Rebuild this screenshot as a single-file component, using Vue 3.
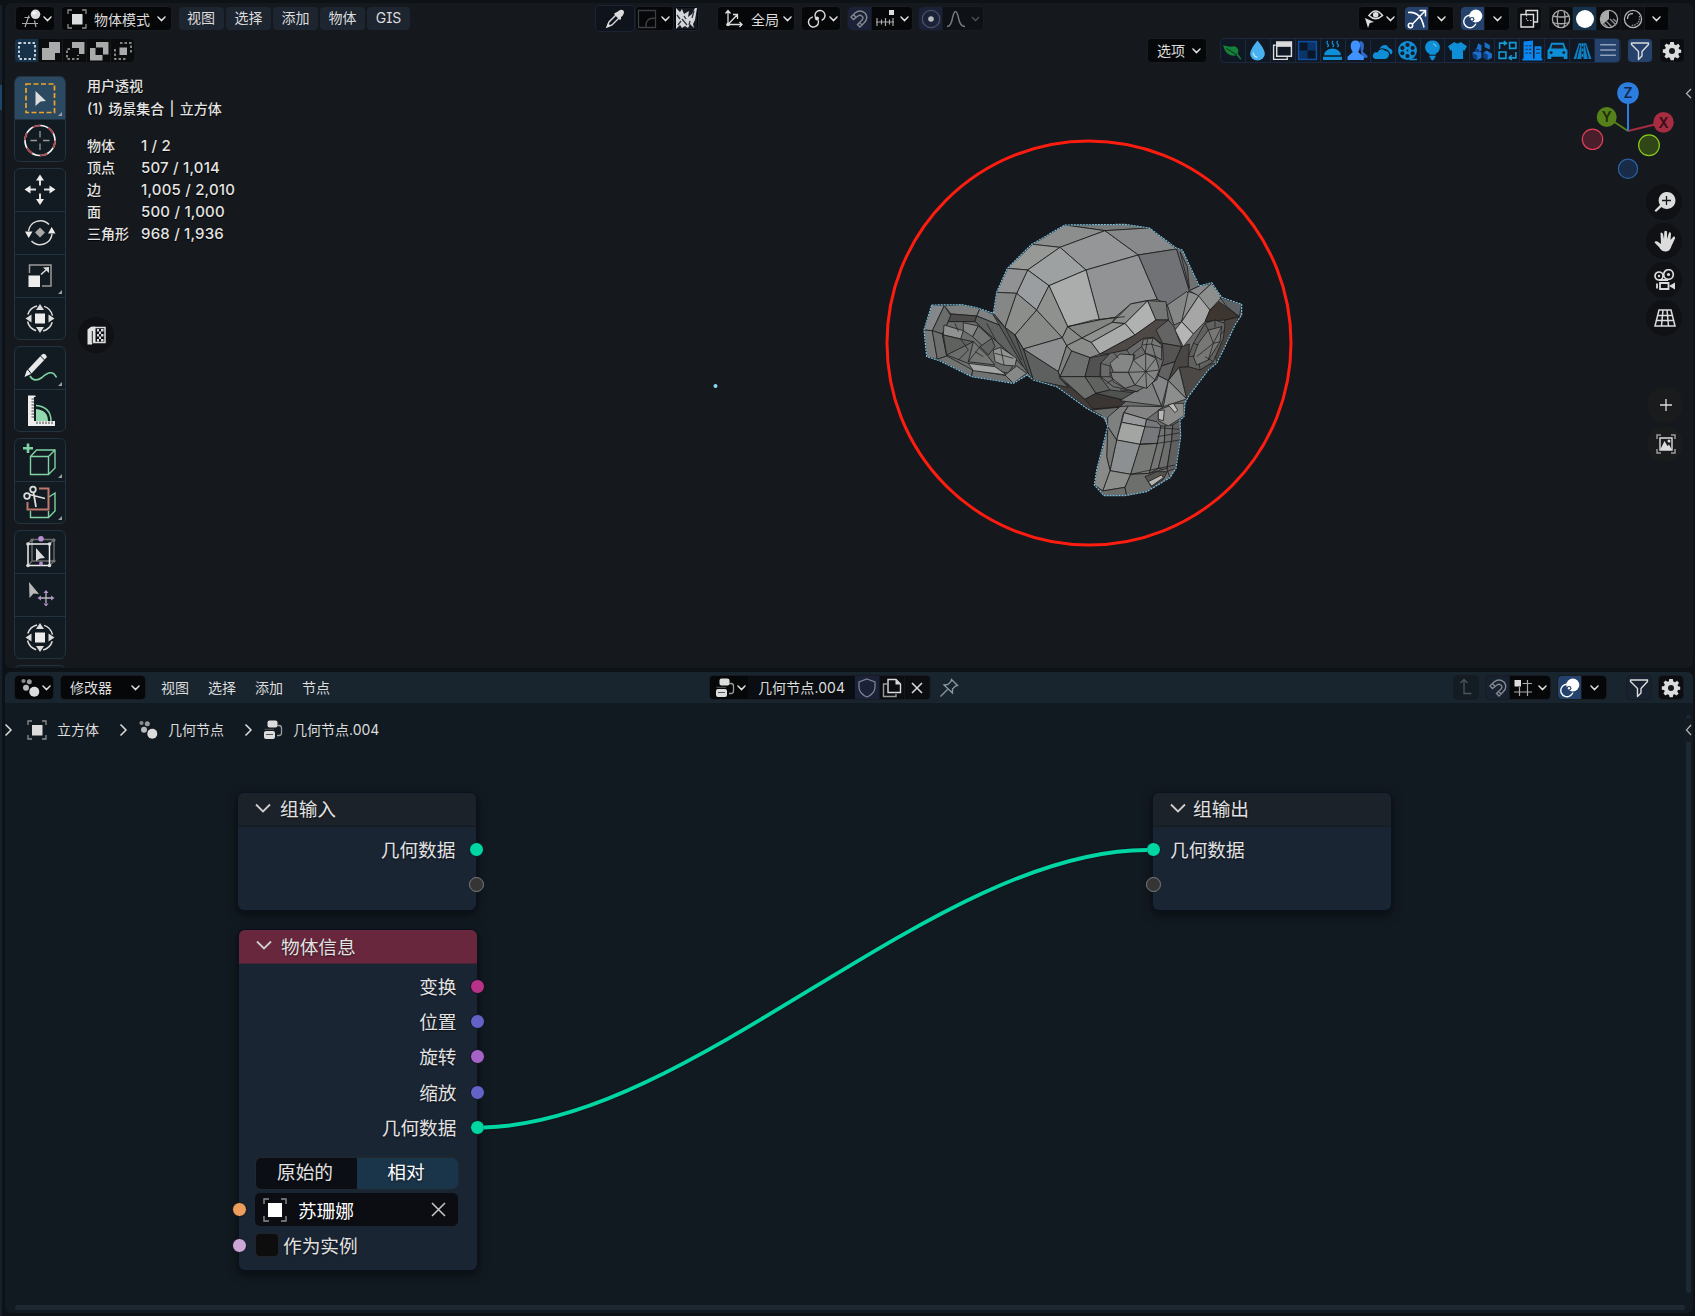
<script setup>
const W = '#dcdcdc'
const s = (d, extra = '') => `<path d="${d}" fill="none" stroke="${W}" stroke-width="1.5" ${extra}/>`
const f = (d, c = W) => `<path d="${d}" fill="${c}"/>`
const c = (x, y, r, fill = W, extra = '') => `<circle cx="${x}" cy="${y}" r="${r}" fill="${fill}" ${extra}/>`
const r = (x, y, w, h, fill = W, extra = '') => `<rect x="${x}" y="${y}" width="${w}" height="${h}" fill="${fill}" ${extra}/>`
const ln = (col, w = 1.3) => `fill="none" stroke="${col}" stroke-width="${w}"`

// small icons, drawn on a 20 x 20 grid
const icons = {
  chev: s('M6.3 8.3L10 12.2L13.7 8.3', 'stroke-linecap="round"'),
  editor3d: `<path d="M3.5 8.5H9M1 14.5H17M8 6.5L4 18M13.5 11.5L15 18" ${ln('#a9a9a9', 1.2)}/>` + c(14.5, 5.3, 4.8) + c(13, 4, 1.6, '#fff'),
  object: `<path d="M1 5V1H5M15 1H19V5M19 15V19H15M5 19H1V15" ${ln('#8d8d8d', 1.3)}/>` + r(5, 5, 10.5, 10.5),
  dropper: `<path d="M2 18L4 13L11 6L14 9L7 16Z" ${ln(W, 1.4)}/>` + f('M10 4L12 3L15 1Q19 0 19 4Q18 7 16 8L16 10L15 11L9 5Z') + f('M1.5 18.500L3 14L5.500 17Z'),
  falloffbox: `<path d="M1.500 1.500H18.500V18.500H1.500ZM9 18Q8 9 18 9" ${ln('#3c3f43', 1.3)}/>`,
  orient: `<path d="M4 2V15.500H18M4 15.500L13 6M1.500 4.500L4 1.500L6.500 4.500M15.500 13L18 15.500L15.500 18M9 5.500H13.500V10" ${ln(W, 1.3)}/>` + c(4, 15.5, 1.8),
  pivot: `<circle cx="13" cy="6.500" r="5" ${ln(W, 1.4)} stroke-dasharray="24 7.400" transform="rotate(150 13 6.500)"/><circle cx="6.500" cy="13" r="5" ${ln(W, 1.4)} stroke-dasharray="24 7.400" transform="rotate(-20 6.500 13)"/>` + c(10, 9.5, 2),
  magnet: `<path d="M2 8L6 4Q11 0 16 4Q20 9 15 14L11 18L8.500 15.500L13 11Q15 8.500 12.800 7Q11 5.500 9 7L4.500 10.500ZM4.500 5.500L7 8.500M13 16L10.500 13.500" ${ln('#85888e', 1.4)}/>`,
  snapinc: `<path d="M1 13H19M2 9V17M6.500 10.500V15.500M10.500 9V17M14.500 10.500V15.500M18 9V17" ${ln('#a9a9a9', 1.2)}/>` + r(14, 1, 5, 5),
  propdot: `<circle cx="10" cy="10" r="8.700" ${ln('#4a5163', 1.3)}/>` + c(10, 10, 2.8, '#b9bbc0'),
  bell: `<path d="M1 17.500Q5 17.500 6.500 9Q9.500 -4 12.500 9Q14 17.500 19 17.500" ${ln('#75787c', 1.5)}/>`,
  chevdim: `<path d="M6.300 8.300L10 12.200L13.700 8.300" ${ln('#4a4d50', 1.5)}/>`,
  eye: `<path d="M5 6.500Q11.500 -2.500 18.500 6.500Q11.500 13 5 6.500Z" ${ln(W, 1.6)}/>` + c(11.7, 5.7, 2.8) + f('M1 9L10 13L5.800 14L4 19Z'),
  gizmo: `<path d="M1 3.500Q14 2 17 18.500M5 15.500L18 2M12.500 1.500H18.500V7.500" ${ln('#fff', 1.5)}/><circle cx="3.500" cy="16.500" r="2.200" ${ln('#fff', 1.5)}/>`,
  overlay: `<circle cx="7" cy="12.500" r="6.200" ${ln('#fff', 1.4)} stroke-dasharray="29 10" transform="rotate(20 7 12.500)"/>` + c(12.8, 7, 6.5, '#fff') + c(9, 10.3, 2.4, '#24406a') + c(9, 10.3, 1.2, '#fff'),
  xray: `<path d="M7 5V1.500H18.500V13H15" ${ln(W, 1.4)}/><path d="M2 5.500H14.500V18H2Z" ${ln(W, 1.4)}/><path d="M7.500 6V11.500H14" ${ln('#bbb', 1.2)} stroke-dasharray="1.500 1.500"/>`,
  wire: `<circle cx="10" cy="10" r="8.600" ${ln('#a9a9a9', 1.3)}/><path d="M1.500 7Q10 9 18.500 7M1.500 13.500Q10 16 18.500 13.500M7.500 1.800Q5 10 7.500 18.200M13 1.800Q15 10 13 18.200" ${ln('#a9a9a9', 1.3)}/>`,
  solid: c(10, 10, 9, '#fff'),
  matprev: `<circle cx="10" cy="10" r="8.600" ${ln('#a9a9a9', 1.3)}/>` + f('M10 1.500V10L3.500 15.500Q0 10 3.500 4.500Q6 1.500 10 1.500Z', '#a9a9a9') + `<path d="M11 10L17 16M14 10L18 13M7.500 12.500L13 18M5 14.500L8.500 18" ${ln('#8d8d8d', 1.4)}/>`,
  render: `<circle cx="10" cy="10" r="8.600" ${ln('#b5b5b5', 1.3)}/><path d="M4.500 10Q4.500 4.500 10 4.500" ${ln('#b5b5b5', 1.3)}/><path d="M16.500 7Q17.500 16 8 16.500" ${ln('#8a8a8a', 1.5)} stroke-dasharray="1.500 1"/>`,
  leaf: f('M1 5Q7 7 12 6Q17 8 15 13L18.500 18L17.500 18.500L14 14.500Q4 17 1 5Z', '#15803a') + `<path d="M4 8L14 14" ${ln('#0b3a20', 1)}/>`,
  drop: f('M10 0.500Q17 9 17 13A7 6.500 0 0 1 3 13Q3 9 10 0.500Z', '#48b1f0') + `<path d="M6 12Q6.500 16 10 16.500" ${ln('#bfe5ff', 1.2)}/>`,
  win: `<path d="M3.500 5H1.500V18.500H14.500V16.500" ${ln(W, 1.3)}/><path d="M4.500 2H18.500V15.500H4.500Z" ${ln(W, 1.4)}/>` + r(4.5, 2, 14, 4.500),
  checker: r(1.5, 1.5, 17, 17, '#0b3468', 'stroke="#0f4fa3" stroke-width="1.400"') + r(2.5, 2.5, 7.5, 7.5, '#0a1728') + r(10, 10, 7.5, 7.5, '#0a1728'),
  steam: f('M2 14.500A8 6.500 0 0 1 18 14.500ZM1 16H19V19H1Z', '#0f8fd8') + `<path d="M5.500 1Q4 2.500 5.500 4T5 6.500M10.500 1Q9 2.500 10.500 4T10 6.500M15 1Q13.500 2.500 15 4T14.500 6.500" ${ln('#0f8fd8', 1.2)}/>`,
  people: f('M12 1Q17 1 16 8L15 11L19.500 15V17H14Z', '#2f68c9') + f('M8 0.500Q13 0.500 12.500 6Q12 10 10.500 11.500L16 16V19H0.500V16L5.500 11.500Q3.500 9 3.500 6Q3.500 0.500 8 0.500Z', '#3f92ff'),
  cloud: f('M3 18Q0 17 1 14Q2 11 5 12Q8 7 12 10Q17 11 16 15Q15 18 12 18Z', '#0f8fd8') + f('M7 9Q9 4 14 5Q16 8 18 8.500Q21 11 18 14Q16 9 12.500 8.500Q9 7 7 9Z', '#0f8fd8'),
  reel: c(10, 10, 9, '#0f8fd8') + c(10, 4.7, 2, '#14202c') + c(10, 15.3, 2, '#14202c') + c(5.1, 7.5, 2, '#14202c') + c(14.9, 7.5, 2, '#14202c') + c(5.1, 12.7, 1.9, '#14202c') + c(14.9, 12.7, 1.9, '#14202c') + c(10, 10, 0.9, '#14202c') + `<path d="M12 18.500H19" ${ln('#0f8fd8', 1.4)}/>`,
  bulb: f('M10 0.500A6.500 6.500 0 0 1 13 13V14H7V13A6.500 6.500 0 0 1 10 0.500ZM7 15H13V16.500H12V18L10 19.500L8 18V16.500H7Z', '#0f8fd8') + `<path d="M10.500 3.500Q13 4 13.500 6.500" ${ln('#6cc4f5', 1)}/>`,
  shirt: f('M7 2Q10 4.500 13 2L19 6L16.500 10.500L15.300 9.500V18H4.700V9.500L3.500 10.500L1 6Z', '#0f8fd8'),
  cubes: f('M6 3L9 5V10L6 12L4 9ZM0.500 12L5 10L9 12V17L5 19L1 17ZM11 12L14 10L19 13V17L15 19L11 17ZM12 2L17 5V9L12 7Z', '#1c70cc') + f('M3 8L7 9V12L3 11ZM1 12.500L5 14.500V19L1 17ZM11 12L15 14V19L11 17Z', '#0b3e80'),
  convert: `<path d="M2 11.500H8.500V17.500H2ZM12 2.500H18V8H12ZM2.500 8.500V3H8.500M6.500 1L9 3L6.500 5M18 11.500V17H12M14 14.500L11.500 17L14 19" ${ln('#149bd8', 1.5)}/>`,
  building: f('M1.500 1.500L10.500 0.500V18H1.500ZM12 6H18.500V18H12ZM0.500 17.500H19.500V19.500H0.500Z', '#0a86f0') + `<path d="M3.300 5.500H9M3.300 9H9M3.300 12.500H9M13.500 9H17M13.500 12.500H17" ${ln('#143c66', 1.2)}/><path d="M6 3V14" ${ln('#0a86f0', 1.2)}/>`,
  car: f('M4 2.500H16L18 8L19.500 9.500V18H16V16H4V18H0.500V9.500L2 8Z', '#0f8fd8') + f('M5 4.500H15L16 8H4Z', '#14202c') + c(4, 12, 1.4, '#14202c') + c(16, 12, 1.4, '#14202c'),
  road: f('M6.500 3H9V18H1.500ZM13.500 3H11V18H18.500Z', '#0f7fc4') + `<path d="M10 3V18" ${ln('#0f8fd8', 1.6)} stroke-dasharray="3 2"/><path d="M4.500 18L7.500 5M15.500 18L12.500 5" ${ln('#14202c', 1)}/>`,
  lines: `<path d="M3 4.500H18M3 9.500H18M3 14.500H18" ${ln('#8fa0bb', 1.4)}/>`,
  funnel: `<path d="M1.500 2H18.500V3.500L12 10.500V15L8.500 18.500V10.500L1.500 3.500Z" ${ln(W, 1.4)} stroke-linejoin="round"/>`,
  gear: f('M8.200 1H11.800L12.300 3.500L14 4.200L16.200 2.800L18 5L16.600 7L17 8.300L19.200 8.700V11.700L16.900 12L16.300 13.600L17.600 15.700L15.500 17.500L13.600 16.200L12.200 16.800L11.800 19.200H8.600L8 16.900L6.500 16.300L4.500 17.600L2.400 15.500L3.700 13.600L3.100 12.100L0.800 11.700V8.500L3.200 8L3.800 6.500L2.500 4.500L4.600 2.500L6.500 3.800L7.900 3.200Z') + c(10, 10, 3, '#15181d'),
  nodes: c(3.5, 3, 2.1, '#8a8a8a') + c(9.3, 3.8, 2.5, '#9a9a9a') + c(6, 9.7, 3, '#b9b9b9') + c(14.300, 13.800, 5),
  tree: r(4.500, 0.500, 10, 7, W, 'rx="2"') + r(1, 11, 11, 8, W, 'rx="2"') + `<path d="M1.500 9.300H11M3 14.500H10" ${ln('#555', 1)}/><path d="M14 5.500H16Q18.500 5.500 18.500 8V13Q18.500 15.500 16 15.500H14" ${ln('#9a9a9a', 1.3)}/>`,
  shield: `<path d="M10 1L18 4V9Q18 15.500 10 19Q2 15.500 2 9V4Z" ${ln('#7c8596', 1.3)}/>`,
  dup: `<path d="M5 6H1.500V18.500H14V16" ${ln('#9a9a9a', 1.4)}/><path d="M6 1.500H14L18.500 6V14.500H6Z" ${ln(W, 1.4)}/>` + f('M13.500 1.500V6.500H18.500Z'),
  x: s('M5 5L15 15M15 5L5 15'),
  pin: `<path d="M12.500 1.500L18.500 7.500L16.500 8L13.500 11V15L5 7L9 6.500L12 3.500ZM8.500 11.500L1.500 18.500" ${ln('#8e979e', 1.3)}/>`,
  up: `<path d="M8 1.500V15.500H15.500M4.500 5L8 1.500L11.500 5" ${ln('#4d545a', 1.3)}/>`,
  gridsnap: `<path d="M14.500 2V18M6.500 9V18M9.500 5.500H19M1 14H19" ${ln('#a9a9a9', 1.2)}/>` + r(1.500, 2, 6.500, 6.500),
  gt: s('M7.500 4.500L13 10L7.500 15.500'),
  selnew: `<path d="M2 2H18V18H2Z" ${ln('#fff', 1.5)} stroke-dasharray="2.500 2"/>`,
  selext: f('M8 1H19V12H14V19H1V7H8Z', '#a9abaa'),
  selsub: f('M7 1H19.500V13H14V7H7Z', '#a9abaa') + `<path d="M5 8H2V18H13V14" ${ln('#a9abaa', 1.5)} stroke-dasharray="2.500 2"/>`,
  seldif: f('M7 1H19.500V13.500H13.500V19.500H1V7H7Z', '#a9abaa') + r(6.5, 6.5, 7.5, 7.5, '#0b0c0d'),
  selint: r(6.5, 6.5, 7.5, 7.500, '#a9abaa') + `<path d="M7 2H18V13M2 8V18H13" ${ln('#a9abaa', 1.5)} stroke-dasharray="2.500 2"/>`
}

const ring = (dash) => `<circle cx="26" cy="21.500" r="12.800" ${ln(W, 1.5)} stroke-dasharray="${dash}" transform="rotate(17 26 21.500)"/>`
const arrows = f('M26 7L30 13H22ZM26 36L30 30H22ZM11.500 21.500L17.500 17.500V25.500ZM40.500 21.500L34.500 17.500V25.500Z')
const transform = ring('13 7.100') + arrows + r(21, 16.500, 10, 10, '#ededed')
// toolbar icons, one per 52 x 43 cell
const tools = {
  select: `<path d="M12 8H40.500V36.500H12Z" ${ln('#f0a526', 1.700)} stroke-dasharray="5 2.500"/>` + f('M21.500 15L32 25L26.500 25.500L21.500 30Z'),
  cursor: `<circle cx="26" cy="21.500" r="15" ${ln('#f2f2f2', 1.700)}/><circle cx="26" cy="21.500" r="15" ${ln('#a8444a', 1.700)} stroke-dasharray="7.850 7.850"/><path d="M26 12V18.500M26 24.500V31M16.500 21.500H23M29 21.500H35.500" ${ln('#999', 1.3)}/>`,
  move: `<path d="M26 12V17.500M26 25.500V31M16 21.500H22M30 21.500H36" ${ln(W, 2)}/>` + f('M26 6.500L30 12.500H22ZM26 37L30 31H22ZM10.500 21.500L16.500 17.500V25.500ZM41.500 21.500L35.500 17.500V25.500Z', '#eee'),
  rotate: `<path d="M14.500 20A12 12 0 0 1 35 13.500M38 23A12 12 0 0 1 17.500 30" ${ln(W, 1.5)}/>` + f('M26 16.500L31 21.500L26 26.500L21 21.500Z', '#a8a8a8') + f('M11 20.500H18.500L14.700 27ZM34 22.500H41.500L37.700 16Z', '#eee'),
  scale: `<path d="M15.500 19V11H37V32H28" ${ln('#9a9a9a', 1.500)}/><path d="M27 20.500L32 16" ${ln(W, 1.5)}/>` + f('M35 13V19L29 13.500Z') + r(14.500, 21.500, 11.500, 11.500, '#ededed'),
  transform,
  annotate: `<path d="M16 30Q20 37 28 31.500Q38 22 42.500 31.500" ${ln('#7fd3a3', 1.700)}/>` + f('M28 8.500Q31 6 33 11L17 28L10.500 31L12.500 25Z', '#e8e8e8') + `<path d="M26 9.500L31 14.500M13.500 23L17.500 28" ${ln('#131b22', 1)}/>`,
  measure: f('M14 6.500H21.500V8H20V32H41V37H14Z', '#ededed') + f('M22 20Q34 21 34 32H22Z', '#93d9b0') + `<path d="M22 16.500Q37 18 37 32" ${ln('#7fd3a3', 1.500)}/><path d="M17.500 10H20M17.500 13H20M17.500 16H20M17.500 19H20M17.500 22H20M17.500 25H20M17.500 28H20M23 32.500V35M26 32.500V35M29 32.500V35M32 32.500V35M35 32.500V35M38 32.500V35" ${ln('#444', 1)}/>`,
  addcube: `<path d="M16.500 18.500H34.500V36.500H16.500ZM16.500 18.500L22.500 12H41V30L34.500 36.500M34.500 18.500L41 12" ${ln('#7fd3a3', 1.4)}/><path d="M14 5.500V15M9 10.300H19" ${ln('#7fd3a3', 2.600)}/>`,
  cutcube: `<path d="M16.500 30V36.500H34.500L41 30V12L35 16M34.500 36.500V30" ${ln('#7fd3a3', 1.4)}/><path d="M25 7.500H34.500V28.500H13.500V21" ${ln('#c0776d', 2)}/><circle cx="19" cy="8.500" r="2.800" ${ln(W, 1.800)}/><circle cx="13" cy="15" r="2.800" ${ln(W, 1.800)}/><path d="M15.500 13.500L31 17.500M19.500 11.500L22 26" ${ln(W, 1.800)}/>`,
  cage: `<path d="M18 9.500H40V31H18ZM14 14L18 9.500M35.500 14L40 9.500M35.500 35.500L40 31M14 35.500L18 31" ${ln('#6d6d6d', 1.400)}/><path d="M14 14H35.500V35.500H14Z" ${ln('#eee', 1.500)}/>` + c(14, 14, 1.8) + c(35.5, 14, 1.8) + c(14, 35.5, 1.8) + c(35.5, 35.5, 1.8) + c(18, 10, 1.6, '#777') + c(40, 10, 1.6, '#777') + c(40, 31, 1.6, '#777') + c(27, 8.700, 2.800, '#b58fd0') + c(27, 33.5, 1.9, '#b58fd0') + f('M22 18L31 28L26 28.500L22 31Z'),
  nudge: f('M15 9L25 21L19.500 20.500L15.500 25Z', '#b9b9b9') + `<path d="M32 20V30M27 25H37" ${ln('#b9b9b9', 1.300)}/>` + f('M32 17L34.500 20H29.500ZM32 33.500L34.500 30.500H29.500ZM23.500 25L27 22.500V27.500ZM40.500 25L37 22.500V27.500Z', '#b58fd0')
}
const toolGroups = [
  [['select', true], ['cursor']],
  [['move'], ['rotate'], ['scale', true], ['transform']],
  [['annotate', true], ['measure']],
  [['addcube', true], ['cutcube', true]],
  [['cage'], ['nudge'], ['transform']],
  [['move']]
]
const menus3d = ['视图', '选择', '添加', '物体', 'GIS']
const menusNode = ['视图', '选择', '添加', '节点']
const selModes = ['selnew', 'selext', 'selsub', 'seldif', 'selint']
const filters = ['leaf', 'drop', 'win', 'checker', 'steam', 'people', 'cloud', 'reel', 'bulb', 'shirt', 'cubes', 'convert', 'building', 'car', 'road', 'lines']
const stats = [['物体', '1 / 2'], ['顶点', '507 / 1,014'], ['边', '1,005 / 2,010'], ['面', '500 / 1,000'], ['三角形', '968 / 1,936']]

const nav = [
  f('M12 1A8.500 8.500 0 1 1 7.500 16L2 21L0.500 19.500L6 14A8.500 8.500 0 0 1 12 1Z') + `<path d="M12.500 5V14M8 9.500H17" ${ln('#15181d', 1.300)}/>`,
  f('M6.500 3Q8 1.500 9 4L10 9L10.300 1.500Q11.800 0 13 1.500V9L15 2.500Q17 1.500 17 4L16.500 10L19.500 6.500Q21.500 6 21 8.500L17.500 16Q16 21.500 11.500 21.500Q7.500 21.500 5 17L0.500 12.500Q1 10.500 3.500 11.500L7 14Z'),
  `<circle cx="5" cy="7" r="4" ${ln(W, 1.700)}/><circle cx="14.500" cy="5.500" r="4.800" ${ln(W, 1.700)}/><path d="M5 11H14M6 14H14.500V20H6ZM3 14.500V19.500" ${ln(W, 1.800)}/>` + c(5, 7, 1.2) + c(14.500, 5.500, 1.600) + f('M15 17L21 13.500V20.500Z'),
  `<path d="M5 3H17L21 19H1ZM3.500 8.500H18.500M2.300 13.500H19.700M9 3L7.500 19M13 3L14.500 19" ${ln(W, 1.500)}/>`
]

// mesh faces: fill, points
const faces = [
  ['#3f3c3a', '460,510 540,505 615,568 720,590 700,605 675,622 625,595 530,530'],
  ['#6b6c6c', '635,600 715,592 683,650 665,617'],
  ['#4b4846', '925,470 1010,460 985,480 920,567 897,470'],
  ['#4a4542', '1035,330 1078,320 1065,345 1030,420 1010,460 1000,400'],
  ['#777a7a', '555,45 735,43 808,54 675,62'],
  ['#8c8e8e', '555,45 675,62 540,112 458,103'],
  ['#949698', '675,62 775,135 618,180 540,112'],
  ['#88898b', '675,62 808,54 890,117 775,135'],
  ['#979997', '458,103 540,112 443,180 383,175'],
  ['#9ea1a1', '540,112 618,180 507,227 443,180'],
  ['#929395', '618,180 775,135 832,268 800,272 752,282 705,322 658,330'],
  ['#717276', '775,135 890,117 928,242 912,270 862,285 832,268'],
  ['#6f7172', '890,117 907,120 935,180 958,228 928,242'],
  ['#606263', '900,125 922,170 928,235'],
  ['#abadad', '507,227 618,180 658,330 563,350'],
  ['#9b9ea0', '443,180 507,227 470,300 410,250'],
  ['#909294', '383,175 443,180 410,250 350,247'],
  ['#858787', '350,247 410,250 375,352 340,310'],
  ['#8c8e8c', '410,250 470,300 405,375 375,352'],
  ['#888a88', '470,300 547,383 430,417 405,375'],
  ['#8f918f', '507,227 563,350 547,383 470,300'],
  ['#8d8f91', '430,417 547,383 560,407 535,485'],
  ['#5e605f', '430,417 535,485 540,505 565,532 460,510'],
  ['#838582', '563,350 658,330 705,322 697,337 606,384'],
  ['#888a88', '547,383 563,350 606,384 560,407'],
  ['#7f8180', '560,407 575,423 540,500 535,485'],
  ['#8a8c8a', '560,407 606,384 634,397 660,432 630,443 575,423'],
  ['#8f918f', '606,384 697,337 735,340 634,397'],
  ['#a9abab', '634,397 735,340 765,375 660,432'],
  ['#b0b2b2', '735,340 803,272 828,330 765,375'],
  ['#8a8b8b', '697,337 752,282 803,272 735,340'],
  ['#757676', '803,272 858,275 865,330 828,330'],
  ['#4e4946', '828,330 865,330 848,400 790,385 740,420 690,432 660,432 765,375'],
  ['#6e706f', '575,423 630,443 615,500 540,500'],
  ['#505150', '630,443 690,432 662,460 660,500 615,500'],
  ['#6c6e6c', '540,500 615,500 648,550 615,568'],
  ['#606260', '615,500 660,500 690,540 648,550'],
  ['#3b3633', '615,568 648,550 740,572 720,590 640,597'],
  ['#505250', '648,550 690,540 760,548 740,572'],
  ['#656464', '828,360 865,330 882,350 905,410 848,400'],
  ['#555453', '848,400 905,410 885,455 838,470'],
  ['#4a4644', '905,410 928,402 925,470 897,472 865,512 885,455'],
  ['#626262', '838,470 885,455 865,512 835,497'],
  ['#7e8080', '897,472 920,567 865,512'],
  ['#7e7f80', '720,572 815,515 845,588'],
  ['#858687', '815,515 835,497 865,512 845,588'],
  ['#8c8e8d', '865,512 920,567 850,590'],
  ['#858787', '862,285 920,245 930,255 905,335 882,345'],
  ['#8e8f8f', '925,245 958,255 905,335'],
  ['#a5a6a5', '958,255 990,300 975,335 940,372 905,335'],
  ['#b5b6b4', '905,335 940,372 910,410 885,360'],
  ['#87898a', '928,242 958,228 995,220 955,257'],
  ['#8d8f8f', '995,220 1025,262 990,300 955,257'],
  ['#5f6265', '1020,262 1085,283 1078,320 1040,290'],
  ['#3c3530', '1017,275 1078,320 1035,330 975,335 990,300'],
  ['#6a6b6a', '662,460 690,430 740,420 790,385 820,382 848,405 850,450 830,510 770,545 700,530 662,500'],
  ['#858786', '690,460 720,432 765,435 750,487 700,487'],
  ['#7b7d7c', '692,487 745,487 765,525 735,535 700,515'],
  ['#848585', '797,430 828,445 838,480 825,510 800,535 765,525 745,487 760,450'],
  ['#787a79', '790,388 820,384 845,405 845,450 828,440 797,430 785,410'],
  ['#616160', '925,440 940,400 975,340 1005,330 1035,340 1030,385 1000,455 960,480 925,470'],
  ['#777876', '940,440 955,400 985,360 1025,350 1020,395 985,450 950,465'],
  ['#838483', '745,588 850,590 800,628 732,608'],
  ['#7f8180', '683,622 720,590 745,588 730,610 710,690 683,650'],
  ['#97999a', '732,608 800,628 795,650 725,637'],
  ['#a3a5a3', '725,637 795,650 780,703 710,690'],
  ['#8c9092', '710,690 780,703 752,793 690,782'],
  ['#8b8d8a', '690,782 752,793 735,832 668,843'],
  ['#777977', '683,650 710,690 690,782 680,740'],
  ['#888a87', '683,655 680,740 690,782 668,843 643,825 650,780'],
  ['#6c6e6c', '643,825 668,843 735,832 740,857 672,857'],
  ['#77787b', '800,628 830,635 843,648 832,700 780,703 795,650'],
  ['#777977', '780,703 832,700 808,790 752,793'],
  ['#747674', '843,648 855,648 853,700 835,775 808,790 832,700'],
  ['#6c6d6c', '855,648 878,645 875,690 860,780 835,775 853,700'],
  ['#5f605f', '878,645 902,630 902,680 888,775 860,785 875,690'],
  ['#6d6f6d', '752,793 808,790 860,775 870,803 800,845 740,857 735,832'],
  ['#8b8c8a', '835,600 890,580 912,580 912,618 865,648 835,632'],
  ['#b7b8b6', '835,602 853,600 850,632 835,628'],
  ['#bcbdbb', '865,585 880,580 893,600 885,608'],
  ['#55534f', '795,800 830,785 862,785 850,808 815,832'],
  ['#b5b6b4', '805,815 845,795 850,803 815,828'],
  ['#85888a', '155,285 193,287 157,362 132,360'],
  ['#6b6d6d', '193,287 213,318 187,372 157,362'],
  ['#77797b', '132,360 157,362 172,448 140,440'],
  ['#6d6f6f', '157,362 187,372 200,438 172,448'],
  ['#727474', '172,448 200,438 278,480 275,500'],
  ['#707271', '278,480 380,497 400,520 275,500'],
  ['#7e8080', '193,287 245,284 300,296 290,318 213,312'],
  ['#4c4b49', '213,312 290,318 285,335 205,335'],
  ['#808282', '300,296 345,315 375,352 290,318'],
  ['#5f6161', '290,318 375,352 430,470 400,440 350,395 285,335'],
  ['#6b6e6c', '205,335 285,335 350,395 410,450 385,490 270,462 200,435 187,372'],
  ['#909292', '192,345 250,362 242,387 190,375'],
  ['#858784', '250,338 295,348 278,380 250,362'],
  ['#727573', '295,348 335,385 310,410 278,380'],
  ['#616462', '335,385 345,410 325,435 300,410'],
  ['#5e615e', '190,375 242,387 280,395 200,435'],
  ['#747773', '280,395 325,440 345,465 265,455'],
  ['#a3a5a5', '265,460 345,470 380,495 280,482'],
  ['#929492', '340,420 362,412 410,445 405,468 370,465 345,455'],
  ['#868888', '410,468 440,490 400,520 375,495'],
  ['#565857', '340,315 375,352 405,375 430,417 460,510 430,470']
]
const wires = [
  'M797 485L797 430M797 485L828 445M797 485L838 480M797 485L825 510M797 485L800 535M797 485L765 525M797 485L745 487M797 485L760 450M662 460L690 468L690 500L662 500M690 500L735 535M785 410L760 430L760 450M720 540L775 545',
  'M820 382L815 400L828 445M788 405L812 402L845 412M803 388L795 430M740 420L750 435M703 430L715 445M680 520L697 510',
  'M1000 400L985 360M1000 400L1025 350M1000 400L1020 395M1000 400L985 450M1000 400L950 440M925 440L945 438M940 400L955 405M975 340L985 360M1005 330V352M960 480L958 462M1035 360L1020 375M1000 455L975 440',
  'M795 650L832 653L900 658M832 680L902 668M780 703L832 700L900 690M752 793L835 775L885 765',
  'M225 340L235 365M242 387L265 420L235 450M265 455L300 410M285 425L310 440M345 430L400 445M362 412L372 465',
  'M563 350L640 330L735 320M405 375L445 490M375 352L425 450M320 340L350 395'
]
const silhouette = '155,285 245,284 290,293 340,310 350,246 382,175 455,103 555,45 735,43 808,54 890,115 907,120 935,180 958,228 995,218 1025,262 1085,283 1085,315 1065,345 1030,420 1010,460 985,480 925,560 915,580 912,620 900,630 902,680 888,775 870,803 800,845 735,857 672,857 643,825 650,780 683,650 675,625 620,595 530,530 460,510 442,495 400,520 275,500 178,452 140,440 132,360'

const outputs = [['变换', 'magenta'], ['位置', 'indigo'], ['旋转', 'violet'], ['缩放', 'indigo'], ['几何数据', 'geo']]
</script>

<template>
  <div class="screen">
    <div class="edge"><i></i></div>
    <section class="view3d">
      <svg class="scene" width="1688" height="665" viewBox="5 3 1688 665">
        <g transform="translate(880 210) scale(.33333)" stroke-linejoin="round">
          <polygon :points="silhouette" fill="#6c6e6d" />
          <polygon v-for="(p, i) in faces" :key="i" :points="p[1]" :fill="p[0]" stroke="#1c1c1c" stroke-width="2.4" />
          <path v-for="w in wires" :key="w" :d="w" fill="none" stroke="#1c1c1c" stroke-width="2.2" />
          <polygon :points="silhouette" fill="none" stroke="#79c3e6" stroke-width="3.4" stroke-dasharray="6 3" />
        </g>
        <circle cx="1089" cy="343" r="202" fill="none" stroke="#fc1c10" stroke-width="3" />
        <circle cx="715.500" cy="386" r="2" fill="#8ad6f5" />
        <g stroke-width="2">
          <path d="M1628 131L1606.700 117" stroke="#55801a" /><path d="M1628 131L1663 122.500" stroke="#a62c42" /><path d="M1628 131V93" stroke="#2b7de0" />
          <circle cx="1606.700" cy="117" r="10" fill="#55801a" /><circle cx="1663.500" cy="122.400" r="10.300" fill="#a62c42" /><circle cx="1628" cy="93" r="10.800" fill="#2b7de0" />
          <g stroke-width="1.200">
            <circle cx="1592.500" cy="139.300" r="10.200" fill="#4a1f2b" stroke="#e0405a" /><circle cx="1649" cy="145.200" r="10.400" fill="#304617" stroke="#86c81c" /><circle cx="1628" cy="168.800" r="9.600" fill="#192c47" stroke="#2a62a8" />
          </g>
        </g>
        <g class="axis" text-anchor="middle"><text x="1628" y="98" fill="#11294a">Z</text><text x="1606.700" y="122" fill="#1c2c08">Y</text><text x="1663.500" y="127.500" fill="#380c15">X</text></g>
        <path d="M1691 89L1686.500 93.500L1691 98" fill="none" stroke="#b0b0b0" stroke-width="1.300" />
      </svg>

      <header class="bar top">
        <div class="grp w38"><svg class="ic" viewBox="0 0 20 20" v-html="icons.editor3d" /><svg class="ch" viewBox="0 0 20 20" v-html="icons.chev" /></div>
        <div class="grp mode"><svg class="ic" viewBox="0 0 20 20" v-html="icons.object" /><span>物体模式</span><svg class="ch" viewBox="0 0 20 20" v-html="icons.chev" /></div>
        <nav class="menus"><b v-for="m in menus3d" :key="m">{{ m }}</b></nav>
        <div class="center">
          <div class="grp tall w38"><svg class="ic" viewBox="0 0 20 20" v-html="icons.dropper" /></div>
          <div class="grp w38"><svg class="ic" viewBox="0 0 20 20" v-html="icons.falloffbox" /><svg class="ch" viewBox="0 0 20 20" v-html="icons.chev" /></div>
          <div class="grp tex"><svg width="21" height="21" viewBox="0 0 21 21"><rect width="21" height="21" fill="#161a20" /><path d="M0 0L4 4L6 1L8 6L13 3L12 9L16 6L19 0L21 0L19 12L17 16L18 20L14 16L12 20L9 18L6 20L4 17L0 21Z" fill="#d4d6da" /><path d="M1 7L4 11M6 11L11 17M2 17L5 13M14 13L13 17M18 3L16 10M8 8L10 11" stroke="#30343c" stroke-width="1.300" /></svg></div>
          <div class="grp orient"><svg class="ic" viewBox="0 0 20 20" v-html="icons.orient" /><span>全局</span><svg class="ch" viewBox="0 0 20 20" v-html="icons.chev" /></div>
          <div class="grp w38 g8"><svg class="ic" viewBox="0 0 20 20" v-html="icons.pivot" /><svg class="ch" viewBox="0 0 20 20" v-html="icons.chev" /></div>
          <div class="grp pair g7"><i class="cell navy"><svg class="ic" viewBox="0 0 20 20" v-html="icons.magnet" /></i><svg class="ic" viewBox="0 0 20 20" v-html="icons.snapinc" /><svg class="ch" viewBox="0 0 20 20" v-html="icons.chev" /></div>
          <div class="grp pair g7 dim"><i class="cell navy"><svg class="ic" viewBox="0 0 20 20" v-html="icons.propdot" /></i><svg class="ic" viewBox="0 0 20 20" v-html="icons.bell" /><svg class="ch" viewBox="0 0 20 20" v-html="icons.chevdim" /></div>
        </div>
        <div class="right">
          <div class="grp w38"><svg class="ic" viewBox="0 0 20 20" v-html="icons.eye" /><svg class="ch" viewBox="0 0 20 20" v-html="icons.chev" /></div>
          <div class="grp duo"><i class="cell on"><svg class="ic" viewBox="0 0 20 20" v-html="icons.gizmo" /></i><svg class="ch" viewBox="0 0 20 20" v-html="icons.chev" /></div>
          <div class="grp duo"><i class="cell on"><svg class="ic" viewBox="0 0 20 20" v-html="icons.overlay" /></i><svg class="ch" viewBox="0 0 20 20" v-html="icons.chev" /></div>
          <div class="grp one"><svg class="ic" viewBox="0 0 20 20" v-html="icons.xray" /></div>
          <div class="grp shade">
            <i class="cell"><svg class="ic" viewBox="0 0 20 20" v-html="icons.wire" /></i><i class="cell teal"><svg class="ic" viewBox="0 0 20 20" v-html="icons.solid" /></i><i class="cell"><svg class="ic" viewBox="0 0 20 20" v-html="icons.matprev" /></i><i class="cell"><svg class="ic" viewBox="0 0 20 20" v-html="icons.render" /></i><i class="cell black"><svg class="ch" viewBox="0 0 20 20" v-html="icons.chev" /></i>
          </div>
        </div>
      </header>

      <div class="bar second">
        <div class="selmodes"><i v-for="(m, i) in selModes" :key="m" :class="{ act: i === 0 }"><svg class="ic" viewBox="0 0 20 20" v-html="icons[m]" /></i></div>
        <div class="right">
          <div class="grp opts"><span>选项</span><svg class="ch" viewBox="0 0 20 20" v-html="icons.chev" /></div>
          <div class="filters"><i v-for="m in filters" :key="m" :class="{ on: m === 'lines' }"><svg width="21" height="21" viewBox="0 0 20 20" v-html="icons[m]" /></i></div>
          <div class="grp one on"><svg class="ic" viewBox="0 0 20 20" v-html="icons.funnel" /></div>
          <div class="grp one"><svg class="ic" viewBox="0 0 20 20" v-html="icons.gear" /></div>
        </div>
      </div>

      <div class="stage">
        <aside class="tools">
          <div v-for="(g, i) in toolGroups" :key="i" class="toolgrp">
            <div v-for="(t, j) in g" :key="j" class="tool" :class="{ sel: t[0] === 'select' }">
              <svg width="52" height="43" viewBox="0 0 52 43" v-html="tools[t[0]]" /><u v-if="t[1]"></u>
            </div>
          </div>
        </aside>
        <div class="info">
          <p>用户透视</p><p>(1) 场景集合 | 立方体</p>
          <dl><template v-for="x in stats" :key="x[0]"><dt>{{ x[0] }}</dt><dd>{{ x[1] }}</dd></template></dl>
        </div>
      </div>
      <div class="round panelbtn"><svg width="19" height="19" viewBox="0 0 19 19"><path d="M5 1.500H18V16.500H5" fill="none" stroke="#dcdcdc" stroke-width="1.500" /><path d="M0.500 3.500L4 0.700H8.500V16H5V18.500H0.500Z" fill="#e2e2e2" /><path d="M5.300 5V17" stroke="#222" /><path d="M10 3H12V5.500H10ZM14 3H16.500V5.500H14ZM12 5.500H14V8H12ZM10 8H12V10.500H10ZM14 8H16.500V10.500H14ZM12 10.500H14V13H12ZM10 13H12V15.500H10ZM14 13H16.500V15.500H14Z" fill="#dcdcdc" /></svg></div>
      <div class="nav">
        <div v-for="n in nav" :key="n" class="round"><svg width="22" height="22" viewBox="0 0 22 22" v-html="n" /></div>
        <div class="round gray far"><svg width="22" height="22" viewBox="0 0 22 22"><path d="M11 5V17M5 11H17" stroke="#dcdcdc" stroke-width="1.300" /></svg></div>
        <div class="round gray"><svg width="22" height="22" viewBox="0 0 22 22"><path d="M2 6V2H6M16 2H20V6M20 16V20H16M6 20H2V16" fill="none" stroke="#999" stroke-width="1.500" /><path d="M5 5H17V17H5Z" fill="none" stroke="#dcdcdc" stroke-width="1.400" /><path d="M5 17L9.500 8L12.500 13L14 11.500L17 17Z" fill="#dcdcdc" /><circle cx="14" cy="8" r="1.500" fill="#dcdcdc" /></svg></div>
      </div>
    </section>

    <section class="nodeed">
      <header class="bar nodebar">
        <div class="grp w38"><svg class="ic" viewBox="0 0 20 20" v-html="icons.nodes" /><svg class="ch" viewBox="0 0 20 20" v-html="icons.chev" /></div>
        <div class="grp modi"><span>修改器</span><svg class="ch" viewBox="0 0 20 20" v-html="icons.chev" /></div>
        <nav class="plain"><b v-for="m in menusNode" :key="m">{{ m }}</b></nav>
        <div class="grp data">
          <i class="cell black w38"><svg class="ic" viewBox="0 0 20 20" v-html="icons.tree" /><svg class="ch" viewBox="0 0 20 20" v-html="icons.chev" /></i><span>几何节点.004</span><i class="cell navy"><svg class="ic" viewBox="0 0 20 20" v-html="icons.shield" /></i><i class="cell"><svg class="ic" viewBox="0 0 20 20" v-html="icons.dup" /></i><i class="cell"><svg class="ic" viewBox="0 0 20 20" v-html="icons.x" /></i>
        </div>
        <svg class="ic pin" viewBox="0 0 20 20" v-html="icons.pin" />
        <div class="right">
          <div class="grp one faint"><svg class="ic" viewBox="0 0 20 20" v-html="icons.up" /></div>
          <div class="grp pair"><i class="cell navy2"><svg class="ic" viewBox="0 0 20 20" v-html="icons.magnet" /></i><svg class="ic" viewBox="0 0 20 20" v-html="icons.gridsnap" /><svg class="ch" viewBox="0 0 20 20" v-html="icons.chev" /></div>
          <div class="grp duo"><i class="cell on"><svg class="ic" viewBox="0 0 20 20" v-html="icons.overlay" /></i><svg class="ch" viewBox="0 0 20 20" v-html="icons.chev" /></div>
          <div class="grp one fil"><svg class="ic" viewBox="0 0 20 20" v-html="icons.funnel" /></div>
          <div class="grp one"><svg class="ic" viewBox="0 0 20 20" v-html="icons.gear" /></div>
        </div>
      </header>

      <div class="crumbs">
        <svg class="ic tab" viewBox="0 0 20 20" v-html="icons.gt" />
        <svg class="ic" viewBox="0 0 20 20" v-html="icons.object" /><span class="c1">立方体</span>
        <svg class="ic" viewBox="0 0 20 20" v-html="icons.gt" />
        <svg class="ic k" viewBox="0 0 20 20" v-html="icons.nodes" /><span class="c2">几何节点</span>
        <svg class="ic" viewBox="0 0 20 20" v-html="icons.gt" />
        <svg class="ic k" viewBox="0 0 20 20" v-html="icons.tree" /><span>几何节点.004</span>
      </div>

      <div class="node in">
        <h3><svg width="16" height="10" viewBox="0 0 16 10"><path d="M1 1.500L8 8.500L15 1.500" /></svg>组输入</h3>
        <div class="row out">几何数据<i class="sock geo"></i></div>
        <div class="row out"><i class="sock virt"></i></div>
      </div>
      <div class="node res">
        <h3><svg width="16" height="10" viewBox="0 0 16 10"><path d="M1 1.500L8 8.500L15 1.500" /></svg>组输出</h3>
        <div class="row inp">几何数据<i class="sock geo"></i></div>
        <div class="row inp"><i class="sock virt"></i></div>
      </div>
      <div class="node obj">
        <h3><svg width="16" height="10" viewBox="0 0 16 10"><path d="M1 1.500L8 8.500L15 1.500" /></svg>物体信息</h3>
        <div v-for="o in outputs" :key="o[0]" class="row out">{{ o[0] }}<i class="sock" :class="o[1]"></i></div>
        <div class="seg"><span>原始的</span><span class="act">相对</span></div>
        <div class="row field"><div class="box"><svg width="24" height="24" viewBox="0 0 24 24"><path d="M1 6V1H6M18 1H23V6M23 18V23H18M6 23H1V18" fill="none" stroke="#8d8d8d" stroke-width="1.400" /><rect x="5" y="5" width="14" height="14" fill="#fff" /></svg><span>苏珊娜</span><svg width="15" height="15" viewBox="0 0 15 15"><path d="M1 1L14 14M14 1L1 14" stroke="#c8c8c8" stroke-width="1.500" /></svg></div><i class="sock orange"></i></div>
        <div class="row check"><em></em>作为实例<i class="sock pink"></i></div>
      </div>
      <svg class="links" width="1688" height="641" viewBox="5 672 1688 641">
        <path d="M484 1127.500C694 1122 936 850 1147 850" fill="none" stroke="#0a1016" stroke-width="6" opacity=".5" />
        <path d="M484 1127.500C694 1122 936 850 1147 850" fill="none" stroke="#00d6a3" stroke-width="3.800" />
      </svg>
      <div class="vscroll"></div><div class="hscroll"></div>
      <svg class="ntab" width="10" height="24" viewBox="0 0 10 24"><path d="M7 7L2.500 12L7 17" fill="none" stroke="#b0b0b0" stroke-width="1.300" /></svg>
    </section>
  </div>
</template>

<style>
body { background: #0d1217; overflow: hidden; }
</style>

<style scoped>
.screen { position: relative; box-sizing: border-box; width: 1695px; height: 1316px; padding: 3px 2px 0 5px; display: flex; flex-direction: column; gap: 4px; background: #0d1217; overflow: hidden; font-family: Inter, "Noto Sans CJK SC", sans-serif; font-feature-settings: "cv08"; font-size: 14px; color: #dcdcdc; }
.edge { position: absolute; left: 0; top: 5px; width: 2px; height: 1311px; background: #17202a; }
.edge i { display: block; margin-top: 80px; height: 25px; background: #1e4566; }
i { font-style: normal; }
b { font-weight: 400; }
svg { display: block; flex: none; }
.view3d { position: relative; height: 665px; flex: none; background: #15181c; border-radius: 6px; overflow: hidden; }
.scene { position: absolute; left: 0; top: 0; }
.axis { font-size: 14px; font-weight: 600; }
.bar { position: relative; display: flex; align-items: center; height: 23px; }
.top { padding: 4px 24px 0 11px; gap: 8px; }
.second { padding: 9px 9px 0 10px; }
.grp { box-sizing: border-box; display: flex; align-items: center; height: 23px; border-radius: 4px; background: #050709; white-space: nowrap; overflow: hidden; flex: none; box-shadow: 0 0 0 1px #181c21; }
.ic { width: 20px; height: 20px; }
.ch { width: 19px; height: 19px; }
.w38 { width: 38px; }
.w38 .ic { margin-left: 5px; }
.w38 .ch { margin-left: -3px; }
.mode { width: 109px; padding-left: 5px; }
.mode span { width: 62px; margin-left: 7px; }
.menus { display: flex; gap: 2px; }
.menus b { box-sizing: border-box; width: 45px; height: 23px; line-height: 21px; text-align: center; border-radius: 4px; background: #1c2530; }
.menus b:first-child { text-indent: -1px; }
.menus b:last-child { width: 43px; }
.center { display: flex; align-items: center; position: absolute; left: 591px; top: 4px; }
.tall { height: 25px; margin: -1px 0; background: #0e131c; box-shadow: 0 0 0 1px #1b2436; }
.tall .ic { margin-left: 9px; }
.tall + .grp { margin-left: 2px; width: 37px; }
.tall + .grp .ic { margin-left: 1px; }
.tall + .grp .ch { margin-left: -1px; }
.tex { width: 24px; margin-left: 1px; padding-left: 2px; box-shadow: 0 0 0 1px #1b2436; }
.orient { width: 76px; margin-left: 20px; padding-left: 6px; }
.orient span { margin-left: 7px; width: 28px; }
.orient .ch { margin-left: -1px; }
.g8 { margin-left: 8px; }
.g7 { margin-left: 7.5px; }
.cell { display: flex; align-items: center; justify-content: center; width: 24px; height: 23px; background: #0b0d11; flex: none; border-right: 1px solid #14171b; box-sizing: border-box; }
.navy { background: #1b2238; }
.navy2 { background: #18212f; }
.on, .filters .on { background: #24426b; }
.teal { background: #16324a; }
.black { background: #050709; }
.pair { width: 64px; }
.pair > .ic { margin-left: 3px; }
.pair > .ch { margin-left: 0; }
.dim { background: #0e1115; }
.right { display: flex; align-items: center; gap: 8px; margin-left: auto; }
.duo { width: 48px; }
.duo > .ch { margin-left: 3px; }
.one { width: 24px; justify-content: center; background: #0b0d11; }
.one.on { background: #24426b; }
.shade { width: 120px; }
.selmodes { display: flex; gap: 1px; }
.selmodes i { display: flex; align-items: center; justify-content: center; width: 23px; height: 23px; background: #0b0c0d; }
.selmodes .act { background: #16324a; }
.selmodes i:first-child { border-radius: 4px 0 0 4px; }
.selmodes i:last-child { border-radius: 0 4px 4px 0; }
.opts { width: 58px; padding-left: 9px; margin-right: 7px; }
.opts span { width: 32px; margin-top: -1px; }
.filters { display: flex; width: 399px; height: 23px; border-radius: 4px; overflow: hidden; background: #101823; box-shadow: 0 0 0 1px #1b2840; }
.filters i { flex: 1; display: flex; align-items: center; justify-content: center; box-sizing: border-box; border-right: 1px solid #1b2840; }
.stage { position: relative; display: flex; padding: 14px 0 0 9px; }
.tools { display: flex; flex-direction: column; gap: 6px; }
.toolgrp { box-sizing: border-box; width: 52px; border: 1px solid #22333f; border-radius: 6px; overflow: hidden; background: #131b22; }
.tool { position: relative; display: flex; box-sizing: border-box; height: 43px; border-bottom: 1px solid #22333f; }
.tool:last-child { height: 41px; border-bottom: 0; }
.tool svg { margin: -1px 0 0 -1px; }
.sel { background: #2b4960; }
.tool u { position: absolute; right: 3px; bottom: 3px; border: 2.5px solid; border-color: transparent #9aa0a4 #9aa0a4 transparent; }
.info { margin: -1px 0 0 21px; text-shadow: 0 1px 1px #000; color: #e4e4e4; font-size: 14px; font-weight: 500; }
.info p { margin: 0; line-height: 22.500px; height: 22.500px; word-spacing: 1.500px; }
.info dl { margin: 14.500px 0 0; display: grid; grid-template-columns: 54px auto; }
.info dt, .info dd { margin: 0; line-height: 22px; height: 22px; }
.info dd { letter-spacing: .2px; font-size: 15px; }
.round { display: flex; align-items: center; justify-content: center; width: 36px; height: 36px; border-radius: 50%; background: #0f1115; }
.round svg { margin-left: 1px; }
.gray { background: #1a1b1d; margin-left: 1px; }
.panelbtn { position: absolute; left: 73px; top: 314px; }
.panelbtn svg { margin-left: 0; }
.nav { position: absolute; left: 1641px; top: 181px; display: flex; flex-direction: column; gap: 2.800px; }
.nav .far { margin-top: 48px; }

.nodeed { position: relative; height: 641px; flex: none; background: #121a21; border-radius: 6px; overflow: hidden; }
.nodebar { box-sizing: border-box; height: 31px; padding: 2px 10px 2px 10px; background: #18252f; }
.modi { width: 84px; margin-left: 8px; padding-left: 9px; }
.modi span { width: 59px; margin-top: -1px; }
.plain { display: flex; gap: 19px; margin-left: 16px; }
.plain b { width: 28px; margin-top: -1px; }
.data { margin-left: 380px; width: 220px; background: #0a0d12; }
.data span { width: 107px; padding-left: 10px; margin-top: -1px; box-sizing: border-box; letter-spacing: .1px; }
.data .w38 .ic { margin-left: 5px; }
.data .w38 { width: 38px; justify-content: flex-start; border: 0; }
.data .cell:not(.w38) { width: 25px; }
.pin { margin-left: 9px; }
.faint { background: #141c23; }
.fil { margin-left: 13px; background: #18212f; }
.crumbs { display: flex; align-items: center; height: 53px; }
.crumbs .tab { margin-left: -7px; margin-right: 9px; }
.crumbs span { margin-left: 10px; margin-top: -2px; }
.crumbs .c1 { width: 42px; margin-right: 14px; }
.crumbs .c2 { width: 56px; margin-right: 14px; }
.crumbs .ic.k { margin-left: 5px; }

.node { position: absolute; box-sizing: border-box; width: 238px; border-radius: 6px; background: #1a2534; box-shadow: 0 0 0 1px #0a1220, 0 3px 10px 2px rgba(0, 0, 0, .5); font-size: 18.700px; color: #e2e2e2; text-shadow: 0 1px 2px rgba(0, 0, 0, .6); }
.node h3 { box-sizing: border-box; display: flex; align-items: center; gap: 9px; height: 34px; margin: 0 0 4px; padding: 0 0 3px 17px; font-size: inherit; font-weight: 400; background: #1c222a; border-bottom: 2px solid #171d24; border-radius: 6px 6px 0 0; }
.node h3 path { fill: none; stroke: #d0d0d0; stroke-width: 1.800; }
.in { left: 233px; top: 121px; height: 117px; }
.res { left: 1148px; top: 121px; height: 117px; }
.res h3 { gap: 7px; }
.obj { left: 234px; top: 258px; height: 340px; }
.obj h3 { background: #68273c; border-bottom: 1px solid #4a2434; margin-bottom: 3.500px; }
.row { position: relative; display: flex; align-items: center; height: 35.400px; }
.out { justify-content: flex-end; padding-right: 20.500px; }
.inp { padding-left: 17px; }
.sock { position: absolute; box-sizing: content-box; width: 13px; height: 13px; border: 1.500px solid #0a1016; border-radius: 50%; top: 11px; }
.out .sock { right: -7.500px; }
.inp .sock, .field .sock, .check .sock { left: -7.500px; }
.geo { background: #00d6a3; }
.virt { background: #353535; border-color: #7d7d7d; }
.magenta { background: #b83289; }
.indigo { background: #6363c7; }
.violet { background: #a663c7; }
.orange { background: #ed9e5c; }
.pink { background: #cca6d6; }
.seg { display: flex; width: 202px; height: 31px; margin: 13.500px 0 0 16.500px; border-radius: 5px; overflow: hidden; box-shadow: 0 0 0 1px #22272d; background: #0b0e15; }
.seg span { flex: 1; text-align: center; line-height: 30px; text-indent: -2px; }
.seg .act { background: #1a344a; color: #fff; }
.field { margin-top: 3px; }
.field .sock { top: 10.500px; }
.box { box-sizing: border-box; display: flex; align-items: center; width: 203px; height: 33px; margin-left: 16px; padding: 0 12px 0 8px; border-radius: 5px; background: #0b0d13; color: #fff; }
.box span { margin-left: 11px; flex: 1; }
.check { margin-top: -1px; }
.check em { width: 22px; height: 22px; margin: 1px 5px 0 17px; border-radius: 4px; background: #0d0d0d; box-shadow: 0 0 0 1px #20242a; }
.check .sock { top: 11.500px; }
.links { position: absolute; left: 0; top: 0; }
.vscroll { position: absolute; left: 1681px; top: 43px; width: 5px; height: 578px; border-radius: 3px; background: #1e2831; }
.hscroll { position: absolute; left: 10px; top: 633px; width: 1670px; height: 5px; border-radius: 3px; background: #1e2831; }
.ntab { position: absolute; left: 1679px; top: 46px; background: #141b22; }
</style>
